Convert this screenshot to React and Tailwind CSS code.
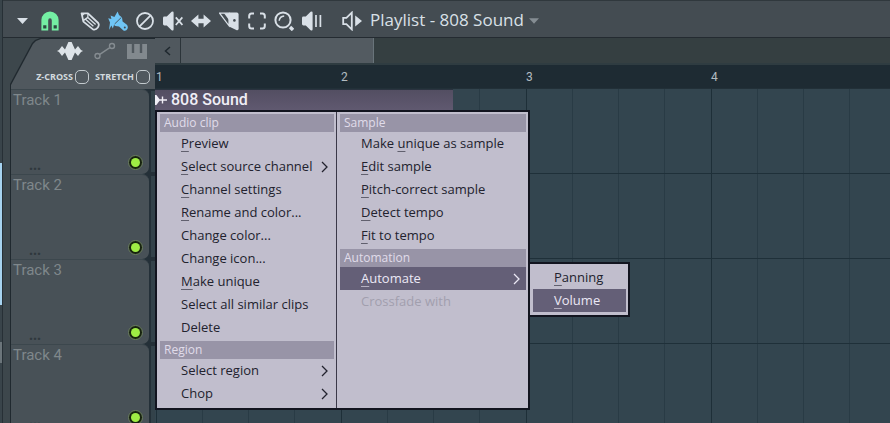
import React from 'react';

const clipMenu = [
  {
    title: 'Audio clip',
    items: [
      { label: 'Preview', hot: 0 },
      { label: 'Select source channel', hot: 0, more: true },
      { label: 'Channel settings', hot: 0 },
      { label: 'Rename and color...', hot: 0 },
      { label: 'Change color...' },
      { label: 'Change icon...' },
      { label: 'Make unique', hot: 0 },
      { label: 'Select all similar clips' },
      { label: 'Delete' },
    ],
  },
  {
    title: 'Region',
    items: [
      { label: 'Select region', more: true },
      { label: 'Chop', more: true },
    ],
  },
];

const sampleMenu = [
  {
    title: 'Sample',
    items: [
      { label: 'Make unique as sample', hot: 5 },
      { label: 'Edit sample', hot: 0 },
      { label: 'Pitch-correct sample', hot: 0 },
      { label: 'Detect tempo', hot: 0 },
      { label: 'Fit to tempo', hot: 0 },
    ],
  },
  {
    title: 'Automation',
    items: [
      {
        label: 'Automate',
        hot: 0,
        more: true,
        active: true,
        children: [
          { label: 'Panning', hot: 0 },
          { label: 'Volume', hot: 0, active: true },
        ],
      },
      { label: 'Crossfade with', disabled: true },
    ],
  },
];

const tracks = ['Track 1', 'Track 2', 'Track 3', 'Track 4'];
const rulerBars = [1, 2, 3, 4];
const gridBars = [1, 2, 3, 4, 5, 6, 7, 8, 9, 10, 11, 12];
const beats = [1, 2, 3, 4];

function Icon({ children }) {
  return (
    <svg className="size-5" viewBox="0 0 20 20" fill="none" stroke="currentColor" strokeWidth="1.8" aria-hidden="true">
      {children}
    </svg>
  );
}

// Toolbar tools, left to right
const tools = [
  {
    name: 'Draw',
    icon: (
      <Icon>
        <path d="M1.6 2.4H8L18.200 12q1.400 2-.4 4.600T13 18.400L3.400 10.600Z" strokeLinejoin="round" />
        <path d="M8 2.400 7.800 6.400 3.200 9.600M7.800 6.400 15.600 13.600M5.800 8.400 13.400 15.200" strokeWidth="1.3" />
        <path d="M1.600 2.400H5L2.200 5.600Z" fill="currentColor" stroke="none" />
      </Icon>
    ),
  },
  {
    name: 'Paint',
    active: true,
    icon: (
      <Icon>
        <path
          d="M9.600.4 11 4l3 2.600.6 3.800 4 3.200q2 2 .8 4.400t-4 1.400L11 15.400l-3.600-.4-1.400-1-1.200 3.400-1.400-2.800L1 19l1-7.400L.2 7.200 3.400 8l-.8-3.400L6.400 6Z"
          fill="currentColor"
          stroke="none"
        />
        <path d="m6.600 13 6.800-6.600" stroke="#444c52" strokeWidth=".9" />
        <circle cx="16.800" cy="16.400" r="1" fill="#444c52" stroke="none" />
      </Icon>
    ),
  },
  {
    name: 'Delete',
    icon: (
      <Icon>
        <circle cx="10" cy="10" r="8" />
        <path d="M15.400 4.600 4.600 15.400" />
      </Icon>
    ),
  },
  {
    name: 'Mute',
    icon: (
      <Icon>
        <path d="M0 7q0-1.400 1.400-1.400h2.400L8.600.8q2-1 2 1v16.400q0 2-2 1l-4.800-4.800H1.400Q0 14.400 0 13Z" fill="currentColor" stroke="none" />
        <path d="m12.800 6.400 6.600 7.600M19.400 6.400 12.800 14" />
      </Icon>
    ),
  },
  {
    name: 'Slip',
    icon: (
      <Icon>
        <path d="M0 10 7.400 3.600v4.200h5.200V3.600L20 10l-7.400 6.400v-4.200H7.400v4.200Z" fill="currentColor" stroke="none" />
      </Icon>
    ),
  },
  {
    name: 'Slice',
    icon: (
      <Icon>
        <path d="M10 1.600h7.800q1.800 0 1.800 1.800v14.200q0 2-1.800 1.600L10 15.600Z" fill="currentColor" stroke="none" />
        <path d="M.6 2.200H10v12.600Z" strokeWidth="1.200" />
        <path d="M5 2.200 10 9V2.200Z" fill="currentColor" stroke="none" />
        <circle cx="15.400" cy="9.400" r="1.300" fill="#444c52" stroke="none" />
      </Icon>
    ),
  },
  {
    name: 'Select',
    icon: (
      <Icon>
        <path
          d="M7 2.400H4.600Q2.200 2.400 2.200 5v2.400M13 2.400h2.400q2.400 0 2.400 2.600v2.400M7 17.600H4.600q-2.400 0-2.400-2.600v-2.400M13 17.600h2.400q2.400 0 2.400-2.600v-2.400"
          strokeWidth="2"
        />
      </Icon>
    ),
  },
  {
    name: 'Zoom',
    icon: (
      <Icon>
        <circle cx="9" cy="9" r="7.600" strokeWidth="2" />
        <path d="M5.200 9.800q.4-4.400 5-4.800" strokeWidth="1.500" />
        <path d="m16 16 3 3" strokeWidth="3.400" />
      </Icon>
    ),
  },
  {
    name: 'Playback',
    icon: (
      <Icon>
        <path d="M0 7q0-1.400 1.400-1.400h2.400L8.600.8q2-1 2 1v16.400q0 2-2 1l-4.800-4.800H1.400Q0 14.400 0 13Z" fill="currentColor" stroke="none" />
        <path d="M14 4v12M18.400 4v12" strokeWidth="1.700" />
      </Icon>
    ),
  },
];

function Label({ text, hot }) {
  if (hot === undefined) return <span>{text}</span>;
  return (
    <span>
      {text.slice(0, hot)}
      <span className="underline decoration-current/60 decoration-1 underline-offset-3">{text[hot]}</span>
      {text.slice(hot + 1)}
    </span>
  );
}

function MenuItem({ item }) {
  return (
    <li className="relative">
      <button
        type="button"
        disabled={item.disabled}
        className={
          'flex h-[23px] w-full items-start justify-between whitespace-nowrap pl-[21px] pr-[6px] text-left text-[13px] leading-[22px] ' +
          (item.active ? 'bg-[#645f77] text-[#ebe8f5]' : item.disabled ? 'text-[#a19fae]' : 'text-[#22222e]')
        }
      >
        <Label text={item.label} hot={item.hot} />
        {item.more && (
          <svg className="mt-[6px] h-3 w-[7px]" viewBox="0 0 7 12" fill="none" stroke="currentColor" strokeWidth="1.3" aria-hidden="true">
            <path d="m1 1 5 5-5 5" />
          </svg>
        )}
      </button>
      {item.children && (
        <ul className="absolute left-full -top-[5px] z-20 ml-[2px] w-[102px] border-2 border-[#12141f] bg-[#c1becd] pb-[3px] pl-[3px] pr-[2px] pt-[2px]">
          {item.children.map((child) => (
            <MenuItem key={child.label} item={child} />
          ))}
        </ul>
      )}
    </li>
  );
}

function MenuColumn({ groups, className }) {
  return (
    <div className={'pb-[1px] pl-[3px] pr-[2px] pt-[2px] ' + className}>
      {groups.map((group) => (
        <section key={group.title} className="pb-[2px]">
          <h2 className="h-[18px] bg-[#9894a7] pl-1 text-[12px] leading-[17px] text-[#e0dcea]">{group.title}</h2>
          <ul>
            {group.items.map((item) => (
              <MenuItem key={item.label} item={item} />
            ))}
          </ul>
        </section>
      ))}
    </div>
  );
}

function Toolbar() {
  return (
    <header className="flex h-[38px] shrink-0 items-center border-b border-t border-b-[#242b31] border-t-[#30383d] bg-[#444c52] pl-[5px] pt-[4px] text-[#d9e0e7]">
      <button type="button" aria-label="Playlist options" className="flex w-7 justify-center">
        <svg className="h-[6px] w-[11px]" viewBox="0 0 11 6" fill="currentColor" aria-hidden="true">
          <path d="M0 0h11L5.5 6Z" />
        </svg>
      </button>
      <button type="button" aria-label="Snap" className="flex w-7 justify-center text-[#74efa3]">
        <Icon>
          <path d="M1.400 19.400V9a8.600 8.600 0 0 1 17.200 0v10.400h-6.800V9.400a1.800 2.200 0 0 0-3.600 0v10Z" fill="currentColor" stroke="none" />
          <path d="M3.200 14.200h3.200v3.400H3.200ZM13.600 14.200h3.200v3.400h-3.200Z" fill="#2c4a41" stroke="none" />
        </Icon>
      </button>
      <div className="ml-[12px] grid w-[250px] grid-cols-9">
        {tools.map((tool) => (
          <button
            key={tool.name}
            type="button"
            aria-label={tool.name}
            className={'flex justify-center ' + (tool.active ? 'text-[#6fc5f5]' : '')}
          >
            {tool.icon}
          </button>
        ))}
      </div>
      <button type="button" className="ml-[16px] flex items-center gap-2 whitespace-nowrap text-[17px] leading-5">
        <Icon>
          <path d="M1.200 6.800h3.200L9.800 1.600v16.800l-5.400-5.200H1.200Z" />
          <path d="M13.200 4.400 20 10l-6.800 5.600Z" fill="currentColor" stroke="none" />
        </Icon>
        <span className="pb-[2px]">Playlist - 808 Sound</span>
        <svg className="-ml-[3px] h-[6px] w-[10px] text-[#858d93]" viewBox="0 0 11 6" fill="currentColor" aria-hidden="true">
          <path d="M0 0h11L5.500 6Z" />
        </svg>
      </button>
    </header>
  );
}

function CheckOption({ label }) {
  return (
    <label className="flex items-center gap-[2px] text-[9px] font-bold leading-3 text-[#d3dade]">
      {label}
      <input type="checkbox" className="size-[14px] appearance-none rounded-[5px] border border-[#c3cace] checked:bg-[#9be83c]" />
    </label>
  );
}

function ClipPanel() {
  return (
    <div className="bg-[#20292f] pl-px pt-px [clip-path:polygon(0_100%,0_46px,22px_5px,25px_2px,30px_0,100%_0,100%_100%)]">
      <div className="flex h-full flex-col justify-between bg-[#50585e] pb-[5px] pl-3 pt-[2px] [clip-path:polygon(0_100%,0_46px,22px_5px,25px_2px,30px_0,100%_0,100%_100%)]">
        <div className="flex items-center gap-[11px] pl-[34px]">
          <button type="button" aria-label="Audio clips" className="text-[#dde3e8]">
            <svg className="h-5 w-[26px]" viewBox="0 0 26 20" fill="currentColor" aria-hidden="true">
              <path d="M0 10 2 9 5 5l3 3.600L11.400 1h3.200L18 8.600 21 5l3 4 2 1-2 1-3 4-3-3.600-3.400 7.600h-3.200L8 11.400 5 15l-3-4Z" />
            </svg>
          </button>
          <button type="button" aria-label="Automation clips" className="text-[#858c91]">
            <svg className="h-5 w-[22px]" viewBox="0 0 22 20" fill="none" stroke="currentColor" strokeWidth="1.400" aria-hidden="true">
              <circle cx="3.500" cy="15" r="2.500" />
              <circle cx="18" cy="5" r="2.500" />
              <path d="M5.800 13.400 15.800 6.600" />
            </svg>
          </button>
          <button type="button" aria-label="Patterns" className="text-[#82898e]">
            <svg className="h-[15px] w-5" viewBox="0 0 20 15" fill="currentColor" aria-hidden="true">
              <path d="M0 0h4.800v9h2.400V0h5.600v9h2.400V0H20v15H0Z" />
            </svg>
          </button>
        </div>
        <div className="flex items-center justify-end gap-[6px] pr-[5px]">
          <CheckOption label="Z-CROSS" />
          <CheckOption label="STRETCH" />
        </div>
      </div>
    </div>
  );
}

function TrackHeader({ name }) {
  return (
    <div className="flex h-[85px] shrink-0 bg-[#243038]">
      <div className="flex flex-1 flex-col justify-between rounded-r-[7px] border-t border-[#3c474d] bg-[#485157] pl-[2px] pt-px">
        <h3 className="font-[Roboto] text-[15px] font-normal leading-[18px] text-[#7f878b]">{name}</h3>
        <div className="flex items-end justify-between pb-[4px] pl-[16px] pr-[6px]">
          <span className="text-[14px] font-bold leading-[10px] text-[#2f383d]">...</span>
          <button
            type="button"
            aria-label={'Mute ' + name}
            className="flex size-[15px] items-center justify-center rounded-full border border-[#6c7f62] bg-[#18240f]"
          >
            <span className="size-[9px] rounded-full bg-[#9fec44]"></span>
          </button>
        </div>
      </div>
      <div className="my-[2px] ml-[2px] w-[4px] bg-[#33424a]"></div>
    </div>
  );
}

function Timeline() {
  return (
    <div className="relative flex-1 bg-[#33454f]">
      <div className="flex h-full overflow-hidden pl-px">
        {gridBars.map((bar) => (
          <div key={bar} className="grid w-[185px] shrink-0 grid-cols-4 border-l border-[#1e2f38]">
            {beats.map((beat) => (
              <div key={beat} className="border-r border-[#293b45] last:border-r-0"></div>
            ))}
          </div>
        ))}
      </div>
      {/* Track separators over the beat lines */}
      <div className="absolute inset-0 overflow-hidden">
        {tracks.map((name) => (
          <div key={name} className="h-[85px] border-b border-[#1f3039]"></div>
        ))}
      </div>
      <div className="absolute left-0 top-0 z-10">
        <div className="flex h-[21px] w-[298px] items-center border-t border-[#2a333f] bg-linear-to-b from-[#534e62] to-[#605970] font-[Roboto] text-[16px] font-medium leading-5 text-[#f0eef6]">
          <svg className="mr-1 h-[10px] w-3" viewBox="0 0 12 10" fill="currentColor" aria-hidden="true">
            <path d="M0 0h1.400l3.200 4.200h2.200V1.400h1.400v2.800H12v1.600H8.200v2.800H6.800V5.800H4.600L1.400 10H0Z" />
          </svg>
          808 Sound
        </div>
        <nav className="relative flex w-[375px] border-2 border-[#12141f] bg-[#c1becd]">
          <MenuColumn groups={clipMenu} className="w-[180px] border-r border-[#3a3848]" />
          <MenuColumn groups={sampleMenu} className="flex-1" />
        </nav>
      </div>
    </div>
  );
}

export default function App() {
  return (
    <div className="flex h-screen overflow-hidden bg-[#3d474c] font-['Open_Sans',sans-serif]">
      {/* Sliver of the window behind */}
      <div className="flex w-[3px] flex-col border-r border-[#273036] bg-[#39444a]">
        <div className="h-[163px]"></div>
        <div className="h-[142px] bg-[#a6d3f0]"></div>
        <div className="h-[37px]"></div>
        <div className="h-[21px] bg-[#6b757a]"></div>
      </div>

      <div className="flex min-w-0 flex-1 flex-col">
        <Toolbar />
        <div className="flex min-h-0 flex-1">
          <div className="flex w-[152px] shrink-0 flex-col pl-[7px]">
            <div className="grid h-[51px] shrink-0">
              <ClipPanel />
            </div>
            <div className="border-l border-[#20292f]">
              {tracks.map((name) => (
                <TrackHeader key={name} name={name} />
              ))}
            </div>
          </div>

          <div className="flex min-w-0 flex-1 flex-col">
            <div className="flex h-[25px] shrink-0 bg-[#353f41]">
              <button
                type="button"
                aria-label="Scroll left"
                className="flex w-[26px] items-center justify-center border-r border-[#2b3439] bg-[#50585e] text-[#1f282e]"
              >
                <svg className="h-[10px] w-[7px]" viewBox="0 0 7 10" fill="none" stroke="currentColor" strokeWidth="1.500" aria-hidden="true">
                  <path d="M6 1 1.500 5 6 9" />
                </svg>
              </button>
              <div className="w-[193px] border-r border-[#69747a] bg-[#535b61]"></div>
            </div>
            <div className="flex h-[26px] shrink-0 border-b border-t-2 border-b-[#223038] border-t-[#2f3c41] bg-[#1e2b33] pl-px font-[Roboto] text-[12px] leading-6 text-[#b3bcc1]">
              {rulerBars.map((bar) => (
                <span key={bar} className="w-[185px] shrink-0 last:w-auto">
                  {bar}
                </span>
              ))}
            </div>
            <Timeline />
          </div>
        </div>
      </div>
    </div>
  );
}
